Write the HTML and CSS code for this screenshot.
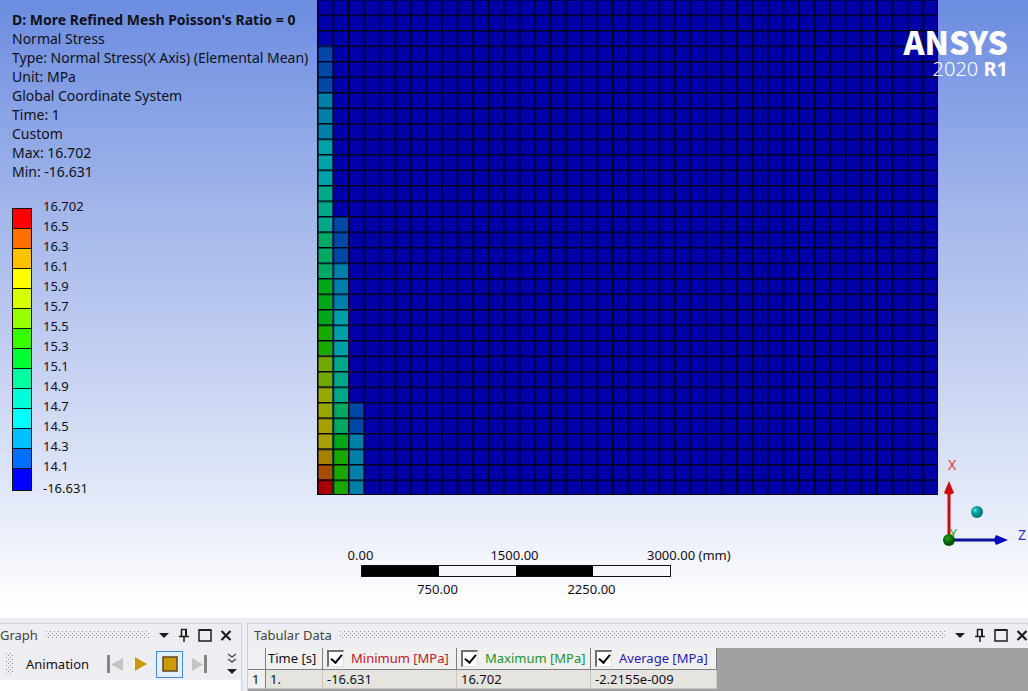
FILE: index.html
```html
<!DOCTYPE html>
<html lang="en">
<head>
  <meta charset="utf-8">
  <title>Normal Stress</title>
  <link rel="stylesheet" href="styles.css">
</head>
<body>
  <main class="viewport">
    <section class="info">
      <h1>D: More Refined Mesh Poisson's Ratio = 0</h1>
      <p>Normal Stress</p>
      <p>Type: Normal Stress(X Axis) (Elemental Mean)</p>
      <p>Unit: MPa</p>
      <p>Global Coordinate System</p>
      <p>Time: 1</p>
      <p>Custom</p>
      <p>Max: 16.702</p>
      <p>Min: -16.631</p>

      <div class="legend">
        <div class="colors">
          <i class="c1"></i><i class="c2"></i><i class="c3"></i><i class="c4"></i><i class="c5"></i>
          <i class="c6"></i><i class="c7"></i><i class="c8"></i><i class="c9"></i><i class="c10"></i>
          <i class="c11"></i><i class="c12"></i><i class="c13"></i><i class="c14"></i>
        </div>
        <ul>
          <li>16.702</li>
          <li>16.5</li>
          <li>16.3</li>
          <li>16.1</li>
          <li>15.9</li>
          <li>15.7</li>
          <li>15.5</li>
          <li>15.3</li>
          <li>15.1</li>
          <li>14.9</li>
          <li>14.7</li>
          <li>14.5</li>
          <li>14.3</li>
          <li>14.1</li>
          <li>-16.631</li>
        </ul>
      </div>
    </section>

    <section class="model">
      <!-- 40 x 32 elements, each 31 units wide -->
      <svg class="mesh" viewBox="0 0 1240 990" preserveAspectRatio="none">
        <defs>
          <pattern id="cell" width="31" height="31" y="-2" patternUnits="userSpaceOnUse">
            <path d="M0 1.500H31M1.500 0V31" stroke="#000018" stroke-width="3" fill="none"/>
          </pattern>
        </defs>
        <rect width="1240" height="990" fill="#0000a8"/>
        <g transform="translate(0 -2)">
          <rect x="0" y="93" width="31" height="93" fill="#0048a8"/>
          <rect x="0" y="186" width="31" height="93" fill="#0080a8"/>
          <rect x="0" y="279" width="31" height="93" fill="#00a0a8"/>
          <rect x="0" y="372" width="31" height="93" fill="#00a888"/>
          <rect x="0" y="465" width="31" height="93" fill="#00a860"/>
          <rect x="0" y="558" width="31" height="93" fill="#00a818"/>
          <rect x="0" y="651" width="31" height="62" fill="#18a800"/>
          <rect x="0" y="713" width="31" height="62" fill="#70a800"/>
          <rect x="0" y="775" width="31" height="62" fill="#98a800"/>
          <rect x="0" y="837" width="31" height="62" fill="#a8a000"/>
          <rect x="0" y="899" width="31" height="31" fill="#a88000"/>
          <rect x="0" y="930" width="31" height="31" fill="#a84c00"/>
          <rect x="0" y="961" width="31" height="31" fill="#a80000"/>
          <rect x="31" y="434" width="31" height="93" fill="#0048a8"/>
          <rect x="31" y="527" width="31" height="93" fill="#0080a8"/>
          <rect x="31" y="620" width="31" height="93" fill="#00a0a8"/>
          <rect x="31" y="713" width="31" height="93" fill="#00a888"/>
          <rect x="31" y="806" width="31" height="62" fill="#00a860"/>
          <rect x="31" y="868" width="31" height="31" fill="#00a818"/>
          <rect x="31" y="899" width="31" height="93" fill="#18a800"/>
          <rect x="62" y="806" width="31" height="62" fill="#0048a8"/>
          <rect x="62" y="868" width="31" height="124" fill="#0080a8"/>
        </g>
        <rect width="1240" height="990" fill="url(#cell)"/>
        <path d="M1 0V989H1239V0" fill="none" stroke="#000018" stroke-width="2"/>
      </svg>

      <div class="ruler">
        <div class="marks">
          <span class="m0">0.00</span>
          <span class="m2">1500.00</span>
          <span class="m4">3000.00 (mm)</span>
        </div>
        <div class="bar"><i></i><i></i><i></i><i></i></div>
        <div class="marks">
          <span class="m1">750.00</span>
          <span class="m3">2250.00</span>
        </div>
      </div>
    </section>

    <div class="logo">
      <strong>ANSYS</strong>
      <span>2020 <b>R1</b></span>
    </div>

    <svg class="triad" width="90" height="95" viewBox="0 0 90 95">
      <defs>
        <radialGradient id="teal" cx="0.35" cy="0.35">
          <stop offset="0" stop-color="#70e0e0"/>
          <stop offset="0.4" stop-color="#10b0b0"/>
          <stop offset="1" stop-color="#008080"/>
        </radialGradient>
        <radialGradient id="green" cx="0.4" cy="0.35">
          <stop offset="0" stop-color="#20a020"/>
          <stop offset="1" stop-color="#005000"/>
        </radialGradient>
      </defs>
      <text x="10" y="15" fill="#d83848">X</text>
      <path d="M11 38V82" stroke="#c01010" stroke-width="3"/>
      <path d="M11 26L16 38Q11 41 6 38Z" fill="#d00808"/>
      <path d="M14 85H58" stroke="#1010a0" stroke-width="3"/>
      <path d="M70 85L58 80Q55 85 58 90Z" fill="#0808c0"/>
      <circle cx="11" cy="85" r="6" fill="url(#green)"/>
      <text x="12" y="83" class="y-label" fill="#20a020">Y</text>
      <circle cx="39" cy="57" r="6" fill="url(#teal)"/>
      <text x="80" y="85" fill="#3030c8">Z</text>
    </svg>
  </main>

  <footer class="panels">
    <section class="panel graph">
      <header>
        <h2>Graph</h2>
        <div class="grip"></div>
        <button aria-label="Menu"><svg width="12" height="14"><path d="M1 5H11L6 10Z" fill="#1e1e1e"/></svg></button>
        <button aria-label="Pin"><svg width="12" height="14"><path d="M3 1.500H9M3.500 1V8M8 1V8M1 8.500H11M6 9V14" stroke="#1e1e1e" stroke-width="1.500" fill="none"/><path d="M7 1H9V8H7Z" fill="#1e1e1e"/></svg></button>
        <button aria-label="Maximize"><svg width="14" height="14"><path d="M1 2H13V13H1Z" stroke="#1e1e1e" stroke-width="1.500" fill="none"/><path d="M1 2H13" stroke="#1e1e1e" stroke-width="2"/></svg></button>
        <button aria-label="Close"><svg width="12" height="14"><path d="M1.500 3L10.500 12M10.500 3L1.500 12" stroke="#1e1e1e" stroke-width="2.200"/></svg></button>
      </header>
      <div class="toolbar">
        <div class="handle"></div>
        <span>Animation</span>
        <button aria-label="First frame"><svg width="18" height="18"><path d="M1 0H4V18H1Z" fill="#858585"/><path d="M17 3V16L5 9.500Z" fill="#c4c4c4"/></svg></button>
        <button aria-label="Play"><svg width="14" height="18"><path d="M1 2L13 9L1 16Z" fill="#cc9a06"/></svg></button>
        <button class="stop" aria-label="Stop"><svg width="16" height="16"><path d="M1 1H15V15H1Z" fill="#cc9a06" stroke="#5c4a1c" stroke-width="1.500"/></svg></button>
        <button aria-label="Last frame"><svg width="18" height="18"><path d="M1 3V16L12 9.500Z" fill="#c4c4c4"/><path d="M13 0H16V18H13Z" fill="#858585"/></svg></button>
        <button class="more" aria-label="More"><svg width="10" height="22"><path d="M1 1L5 4L9 1M1 6L5 9L9 6" stroke="#505050" stroke-width="1.500" fill="none"/><path d="M0 16H10L5 21Z" fill="#1e1e1e"/></svg></button>
      </div>
    </section>

    <section class="panel tabular">
      <header>
        <h2>Tabular Data</h2>
        <div class="grip"></div>
        <button aria-label="Menu"><svg width="12" height="14"><path d="M1 5H11L6 10Z" fill="#1e1e1e"/></svg></button>
        <button aria-label="Pin"><svg width="12" height="14"><path d="M3 1.500H9M3.500 1V8M8 1V8M1 8.500H11M6 9V14" stroke="#1e1e1e" stroke-width="1.500" fill="none"/><path d="M7 1H9V8H7Z" fill="#1e1e1e"/></svg></button>
        <button aria-label="Maximize"><svg width="14" height="14"><path d="M1 2H13V13H1Z" stroke="#1e1e1e" stroke-width="1.500" fill="none"/><path d="M1 2H13" stroke="#1e1e1e" stroke-width="2"/></svg></button>
        <button aria-label="Close"><svg width="12" height="14"><path d="M1.500 3L10.500 12M10.500 3L1.500 12" stroke="#1e1e1e" stroke-width="2.200"/></svg></button>
      </header>
      <div class="sheet">
        <table>
          <colgroup>
            <col class="w-num"><col class="w-time"><col class="w-val"><col class="w-val"><col class="w-avg">
          </colgroup>
          <thead>
            <tr>
              <th></th>
              <th>Time [s]</th>
              <th><label class="min"><input type="checkbox" checked>Minimum [MPa]</label></th>
              <th><label class="max"><input type="checkbox" checked>Maximum [MPa]</label></th>
              <th><label class="avg"><input type="checkbox" checked>Average [MPa]</label></th>
            </tr>
          </thead>
          <tbody>
            <tr>
              <th>1</th>
              <td>1.</td>
              <td>-16.631</td>
              <td>16.702</td>
              <td>-2.2155e-009</td>
            </tr>
          </tbody>
        </table>
      </div>
    </section>
  </footer>
</body>
</html>
```
FILE: styles.css
```css
* {
  box-sizing: border-box;
}
body {
  margin: 0;
  min-height: 100vh;
  display: flex;
  flex-direction: column;
  overflow: hidden;
  background: #eeeef2;
  color: #101018;
  font-family: "Noto Sans", "Open Sans", sans-serif;
  font-size: 13px;
}
h1, h2, p, ul {
  margin: 0;
  padding: 0;
}
svg {
  display: block;
}
button {
  padding: 0;
  border: none;
  background: none;
}

/* 3D view */
.viewport {
  position: relative;
  display: grid;
  grid-template-columns: 317px 1fr 90px;
  height: 618px;
  background: linear-gradient(#6b8ce0, #a0b4ea 32%, #c4d0f2 58%, #e2e8f8 80%, #fff 98%);
}
.info {
  padding: 10px 0 0 12px;
  font-size: 14px;
  line-height: 19px;
  white-space: nowrap;
}
.info h1 {
  font-size: 14px;
  line-height: 19px;
}
.legend {
  display: flex;
  gap: 11px;
  margin-top: 15px;
  font-size: 13px;
}
.legend ul {
  list-style: none;
}
.legend li {
  line-height: 20px;
}
.legend li:last-child {
  line-height: 24px;
}
.colors {
  width: 20px;
  margin-top: 12px;
}
.colors i {
  display: block;
  height: 20px;
  border: 1px solid #101018;
  border-bottom: none;
}
.colors i:last-child {
  height: 23px;
  border-bottom: 1px solid #101018;
}
.c1 { background: #f00; }
.c2 { background: #ff7000; }
.c3 { background: #ffc000; }
.c4 { background: #ff0; }
.c5 { background: #d8ff00; }
.c6 { background: #98ff00; }
.c7 { background: #38ff00; }
.c8 { background: #00ff30; }
.c9 { background: #00ffa0; }
.c10 { background: #00ffd8; }
.c11 { background: #0ff; }
.c12 { background: #00c0ff; }
.c13 { background: #0070ff; }
.c14 { background: #00f; }

.mesh {
  width: 100%;
  height: 495px;
}
.ruler {
  width: 462px;
  margin: 50px 0 0 5px;
}
.marks {
  display: grid;
  grid-template-columns: repeat(6, 77px);
  line-height: 20px;
  text-align: center;
  white-space: nowrap;
}
.m0 { grid-column: 1; }
.m1 { grid-column: 2; }
.m2 { grid-column: 3; }
.m3 { grid-column: 4; }
.m4 {
  grid-column: 5 / 7;
  padding-left: 17px;
  text-align: left;
}
.bar {
  display: flex;
  width: 310px;
  height: 12px;
  margin: 0 0 2px 39px;
  border: 1px solid #101018;
}
.bar i {
  flex: 1;
}
.bar i:nth-child(odd) {
  background: #000;
}

.logo {
  position: absolute;
  top: 24px;
  right: 20px;
  color: #fff;
  text-align: right;
}
.logo strong {
  display: block;
  font-family: "Noto Sans CJK JP", "Noto Sans", sans-serif;
  font-size: 32px;
  font-weight: 900;
  line-height: 34px;
}
.logo span {
  display: block;
  font-size: 20px;
  font-weight: 300;
  line-height: 22px;
}
.logo b {
  font-weight: 700;
}
.triad {
  position: absolute;
  top: 455px;
  right: 0;
  font-size: 14px;
}
.y-label {
  font-size: 12px;
}

/* docked panels */
.panels {
  flex: 1;
  display: flex;
  gap: 5px;
  padding-top: 5px;
}
.panel {
  display: flex;
  flex-direction: column;
  border-top: 1px solid #ccceda;
}
.graph {
  width: 242px;
  border-right: 1px solid #ccceda;
}
.tabular {
  flex: 1;
  min-width: 0;
  border-left: 1px solid #ccceda;
}
.panel header {
  display: flex;
  align-items: center;
  gap: 8px;
  height: 24px;
  padding: 0 9px 2px 0;
}
.tabular header {
  padding: 0 0 2px 6px;
}
.panel h2 {
  color: #444;
  font-size: 13px;
  font-weight: 400;
}
.grip {
  flex: 1;
  height: 8px;
}
.grip,
.handle {
  background:
    conic-gradient(from 270deg at 1px 1px, #909098 90deg, transparent 0) 0 0 / 4px 4px,
    conic-gradient(from 270deg at 1px 1px, #909098 90deg, transparent 0) 2px 2px / 4px 4px;
}
.toolbar {
  display: flex;
  align-items: center;
  height: 32px;
  padding-left: 6px;
}
.graph::after {
  content: "";
  flex: 1;
  background: #fff;
}
.toolbar span {
  margin: 0 11px 0 13px;
}
.toolbar button {
  margin-right: 8px;
}
.toolbar span + button {
  margin: 0 10px 0 6px;
}
.toolbar .stop {
  display: grid;
  place-items: center;
  width: 27px;
  height: 27px;
  border: 1px solid #3c8cdc;
  background: #e2effc;
}
.toolbar .more {
  margin: 0 4px 0 auto;
}
.handle {
  width: 7px;
  height: 22px;
}

.sheet {
  flex: 1;
  background: #a0a0a0;
}
table {
  width: 469px;
  table-layout: fixed;
  border-collapse: separate;
  border-spacing: 0;
  white-space: nowrap;
}
.w-num { width: 18px; }
.w-time { width: 57px; }
.w-val { width: 134px; }
.w-avg { width: 126px; }
th, td {
  height: 19px;
  padding: 0 4px;
  border-right: 1px solid #c8c6c0;
  border-bottom: 1px solid #c8c6c0;
  background: #e6e4de;
  line-height: 17px;
  font-weight: 400;
  text-align: left;
}
thead th {
  height: 22px;
  border-right-color: #808080;
  border-bottom-color: #808080;
  background: #f0f0f0;
}
tbody th {
  border-right-color: #808080;
  background: #f0f0f0;
}
thead th:nth-child(2) {
  padding: 0 2px;
}
label {
  display: flex;
  align-items: center;
  gap: 7px;
}
.min { color: #c01828; }
.max { color: #209030; }
.avg { color: #2818b8; }
input[type="checkbox"] {
  appearance: none;
  display: grid;
  place-items: center;
  width: 17px;
  height: 17px;
  margin: 0;
  border: 1px solid #e0e0e0;
  border-top: 2px solid #707070;
  border-left: 2px solid #707070;
  background: #fff;
}
input[type="checkbox"]:checked::after {
  content: "";
  width: 5px;
  height: 9px;
  margin-bottom: 3px;
  border: solid #000;
  border-width: 0 2px 2px 0;
  transform: rotate(40deg);
}
```
